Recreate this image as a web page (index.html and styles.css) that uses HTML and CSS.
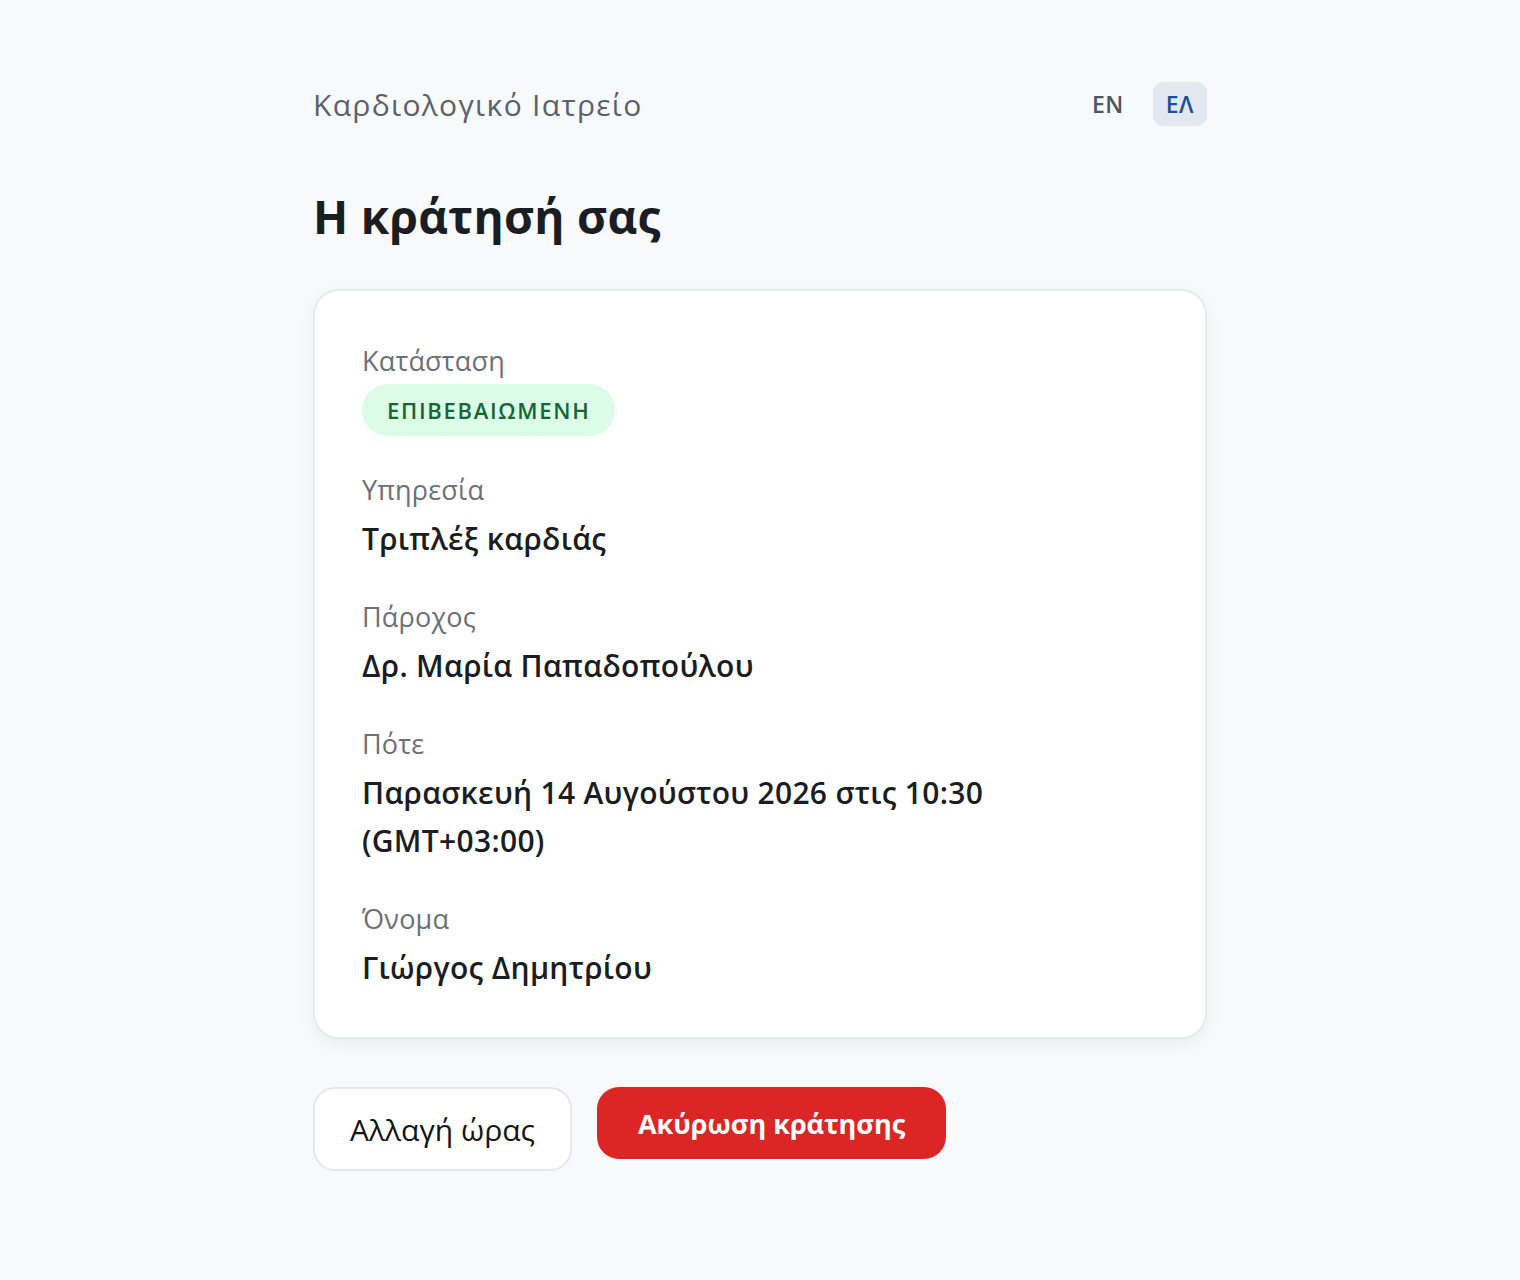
FILE: index.html
```html
<!DOCTYPE html>
<html lang="el">
<head>
<meta charset="utf-8">
<title>Η κράτησή σας</title>
<link rel="stylesheet" href="styles.css">
</head>
<body>
<main class="page">
  <header class="topbar">
    <div class="clinic">Καρδιολογικό Ιατρείο</div>
    <nav class="langs">
      <a class="lang">EN</a>
      <a class="lang active">ΕΛ</a>
    </nav>
  </header>
  <h1 class="title">Η κράτησή σας</h1>
  <section class="card">
    <div class="field">
      <div class="label">Κατάσταση</div>
      <span class="badge">ΕΠΙΒΕΒΑΙΩΜΕΝΗ</span>
    </div>
    <div class="field">
      <div class="label">Υπηρεσία</div>
      <div class="value">Τριπλέξ καρδιάς</div>
    </div>
    <div class="field">
      <div class="label">Πάροχος</div>
      <div class="value">Δρ. Μαρία Παπαδοπούλου</div>
    </div>
    <div class="field">
      <div class="label">Πότε</div>
      <div class="value">Παρασκευή 14 Αυγούστου 2026 στις 10:30<br>(GMT+03:00)</div>
    </div>
    <div class="field">
      <div class="label">Όνομα</div>
      <div class="value">Γιώργος Δημητρίου</div>
    </div>
  </section>
  <div class="actions">
    <button class="btn btn-outline">Αλλαγή ώρας</button>
    <button class="btn btn-danger">Ακύρωση κράτησης</button>
  </div>
</main>
</body>
</html>
```
FILE: styles.css
```css
* { box-sizing: border-box; }
html, body { margin: 0; padding: 0; }
body {
  background: #f8f9fb;
  font-family: "Open Sans", "Noto Sans", sans-serif;
  color: #1a1d21;
}
.page {
  width: 894px;
  margin: 0 auto;
  padding-top: 82px;
}
.topbar {
  display: flex;
  justify-content: space-between;
  align-items: center;
  height: 44px;
}
.clinic {
  font-size: 30px;
  font-weight: 500;
  letter-spacing: 1.3px;
  color: #5a616b;
}
.langs {
  display: flex;
  align-items: center;
  gap: 16px;
}
.lang {
  display: block;
  height: 44px;
  line-height: 44px;
  padding: 0 13px;
  border-radius: 10px;
  font-size: 23px;
  font-weight: 600;
  letter-spacing: 0.5px;
  color: #4b5563;
}
.lang.active {
  background: #e2e8f0;
  color: #1e4e9c;
}
.title {
  margin: 58px 0 41px;
  font-size: 46px;
  line-height: 64px;
  font-weight: 700;
  letter-spacing: 0.3px;
  color: #1a1d21;
}
.card {
  background: #fff;
  border: 2px solid #e8eaed;
  border-radius: 26px;
  box-shadow: 0 6px 16px rgba(15, 23, 42, 0.05);
  padding: 50px 47px 45px;
  display: flex;
  flex-direction: column;
  gap: 34px;
}
.field { display: flex; flex-direction: column; align-items: flex-start; }
.label {
  font-size: 27px;
  line-height: 40px;
  letter-spacing: 0.2px;
  color: #6b7079;
}
.badge {
  margin-top: 3px;
  height: 52px;
  line-height: 52px;
  padding: 0 25px;
  border-radius: 26px;
  background: #dcfce7;
  color: #166534;
  font-size: 22px;
  font-weight: 600;
  letter-spacing: 1.7px;
}
.value {
  margin-top: 5px;
  font-size: 30px;
  line-height: 48px;
  font-weight: 600;
  letter-spacing: 0.3px;
  color: #1a1d21;
}
.actions {
  display: flex;
  align-items: flex-start;
  gap: 25px;
  margin-top: 48px;
}
.btn {
  font-family: "Open Sans", "Noto Sans", sans-serif;
  border-radius: 22px;
  cursor: pointer;
}
.btn-outline {
  height: 84px;
  padding: 0 35px;
  background: #fff;
  border: 2px solid #e5e7eb;
  color: #111418;
  font-size: 30px;
  font-weight: 500;
}
.btn-danger {
  height: 72px;
  padding: 0 41px;
  background: #dc2626;
  border: none;
  color: #fff;
  font-size: 27px;
  font-weight: 700;
}
```
